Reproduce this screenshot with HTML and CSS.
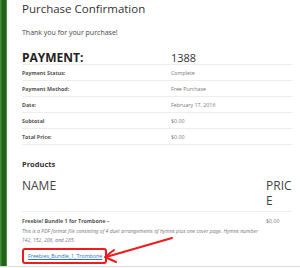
FILE: index.html
```html
<!DOCTYPE html>
<html lang="en">

<head>
    <meta charset="UTF-8">
    <meta name="viewport" content="width=device-width, initial-scale=1.0">
    <title>Purchase Confirmation</title>
    <link rel="stylesheet" href="styles.css">
</head>

<body>
    <div class="page">
        <div class="bar"></div>
        <div class="content">
            <h1 class="title">Purchase Confirmation</h1>
            <p class="thanks">Thank you for your purchase!</p>

            <div class="pay-head">
                <span class="pay-label">PAYMENT:</span>
                <span class="pay-num">1388</span>
            </div>
            <div class="details">
                <div class="row"><span class="label">Payment Status:</span><span class="value">Complete</span></div>
                <div class="row"><span class="label">Payment Method:</span><span class="value">Free Purchase</span></div>
                <div class="row"><span class="label">Date:</span><span class="value">February 17, 2016</span></div>
                <div class="row"><span class="label">Subtotal</span><span class="value">$0.00</span></div>
                <div class="row"><span class="label">Total Price:</span><span class="value">$0.00</span></div>
            </div>

            <h2 class="products">Products</h2>
            <div class="prod-head">
                <span>NAME</span>
                <span class="price-col">PRICE</span>
            </div>
            <div class="prod-row">
                <div class="prod-info">
                    <div class="prod-name">Freebie! Bundle 1 for Trombone &ndash;</div>
                    <p class="prod-desc">This is a PDF format file consisting of 4 duet arrangements of hymns plus one cover page. Hymns number 142, 152, 208, and 285.</p>
                    <span class="file-box"><a href="#">Freebies_Bundle_1_Trombone</a></span>
                </div>
                <div class="prod-price">$0.00</div>
            </div>
        </div>

        <svg class="arrow" width="300" height="268" viewBox="0 0 300 268">
            <line x1="172" y1="238" x2="106" y2="257" stroke="#ee1c1c" stroke-width="2" stroke-linecap="round" />
            <polyline points="114,250 105,257 116,262" fill="none" stroke="#ee1c1c" stroke-width="2" stroke-linecap="round" stroke-linejoin="round" />
        </svg>
    </div>
</body>

</html>
```

FILE: styles.css
```css
body,
h1,
h2,
p {
    margin: 0;
    padding: 0;
}

body {
    font-family: "Open Sans", "Liberation Sans", sans-serif;
    background-color: #fff;
    color: #444;
}

.page {
    display: flex;
    height: 266px;
    border-bottom: 1px solid #dcdcdc;
    position: relative;
    overflow: hidden;
}

.bar {
    width: 7px;
    flex-shrink: 0;
    background: linear-gradient(to right, #4f9a3f, #23661a 30%, #1d5c14 75%, #5aa34a);
}

.content {
    flex: 1;
    padding: 0 8px 0 15px;
}

.title {
    font-size: 11.5px;
    font-weight: normal;
    line-height: 16px;
    color: #333;
    padding-top: 1px;
}

.thanks {
    font-size: 7px;
    line-height: 10px;
    margin-top: 11px;
    color: #444;
}

.pay-head {
    display: grid;
    grid-template-columns: 149px 1fr;
    align-items: baseline;
    margin-top: 13px;
    line-height: 13px;
    border-bottom: 1px solid #eee;
}

.pay-label {
    font-size: 12px;
    font-weight: bold;
    color: #222;
}

.pay-num {
    font-size: 11px;
    color: #333;
}

.details .row {
    display: grid;
    grid-template-columns: 149px 1fr;
    align-items: center;
    height: 15px;
    border-bottom: 1px solid #eee;
    font-size: 5.3px;
}

.details .label {
    font-weight: bold;
    color: #555;
}

.details .value {
    color: #777;
}

.products {
    font-size: 7.5px;
    font-weight: bold;
    color: #333;
    line-height: 10px;
    margin-top: 14px;
}

.prod-head {
    display: grid;
    grid-template-columns: 1fr 26px;
    font-size: 12px;
    line-height: 15px;
    color: #444;
    margin-top: 9px;
    padding-bottom: 3px;
    border-bottom: 1px solid #eee;
}

.price-col {
    word-break: break-all;
}

.prod-row {
    display: grid;
    grid-template-columns: 1fr 26px;
    font-size: 5.3px;
    padding-top: 5px;
}

.prod-name {
    font-weight: bold;
    color: #555;
    line-height: 8px;
}

.prod-desc {
    font-size: 5.1px;
    font-style: italic;
    color: #777;
    line-height: 8.5px;
    margin-top: 2px;
}

.prod-price {
    color: #777;
    line-height: 8px;
}

.file-box {
    display: inline-block;
    margin-top: 4px;
    padding: 2px 3px 2px 4px;
    border: 2px solid #ee1c1c;
    border-radius: 3px;
    line-height: 8px;
}

.file-box a {
    color: #2a6fcf;
}

.arrow {
    position: absolute;
    left: 0;
    top: 0;
    pointer-events: none;
}
```
